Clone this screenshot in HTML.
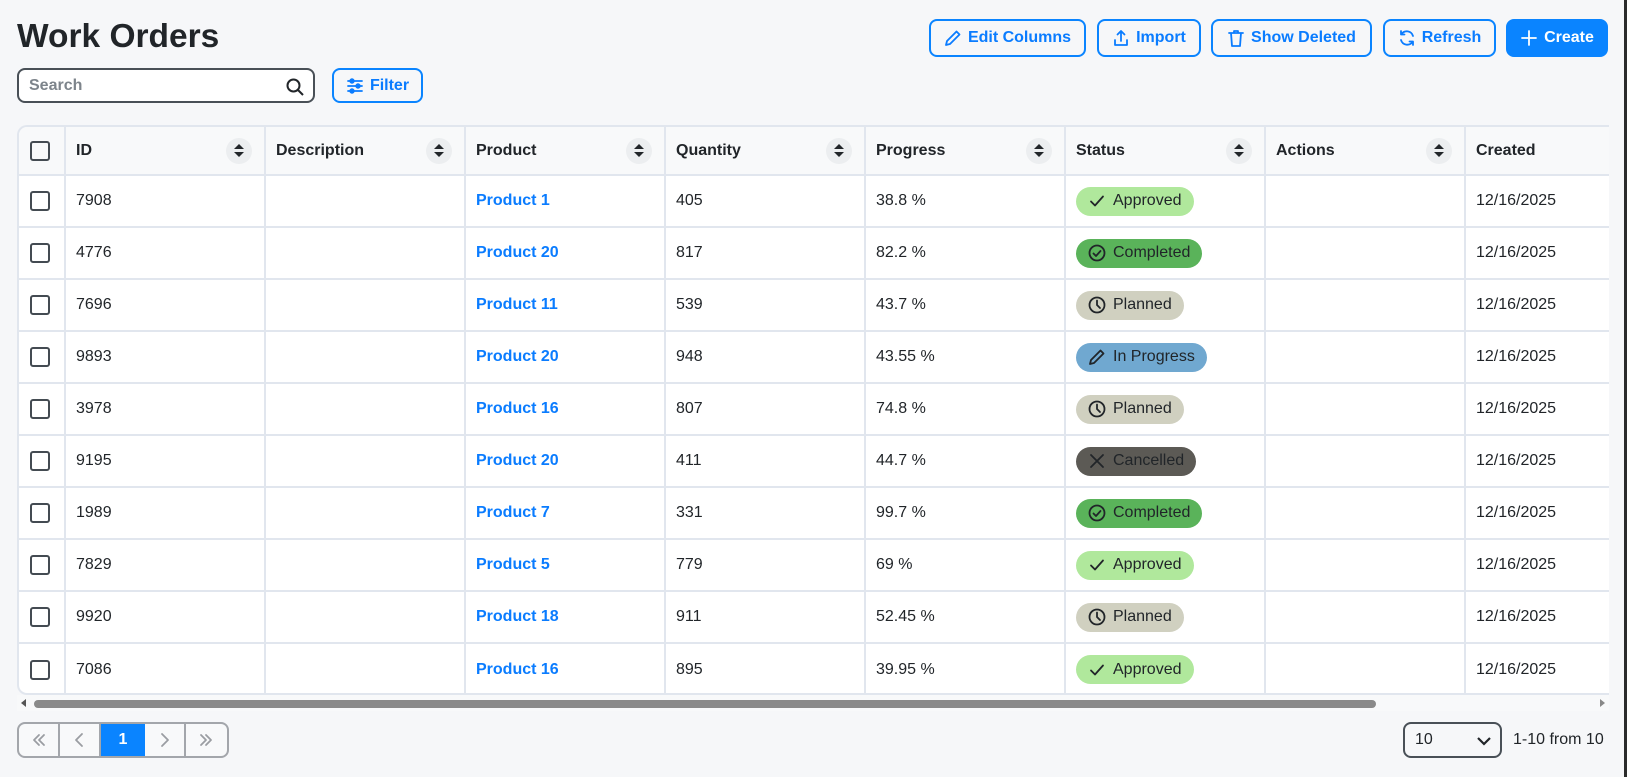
<!DOCTYPE html>
<html><head><meta charset="utf-8"><style>
*{box-sizing:border-box;margin:0;padding:0}
body{width:1627px;height:777px;background:#f6f7f9;font-family:"Liberation Sans",sans-serif;color:#212529;position:relative;overflow:hidden}
.strip{position:absolute;right:0;top:0;width:3px;height:777px;background:#2b2b2b}
h1{position:absolute;left:17px;top:18px;font-size:33.5px;font-weight:bold;color:#212529}
.search{position:absolute;left:17px;top:68px;width:298px;height:35px;border:2px solid #495057;border-radius:8px;background:#fff;font-size:16px;font-weight:bold;color:#7d848b;padding:7px 10px}
.search svg{position:absolute;right:8px;top:7px}
.btn{position:absolute;height:38px;border:2px solid #0a84ff;border-radius:8px;color:#0a7cff;font-weight:bold;font-size:16px;display:flex;align-items:center;justify-content:center;gap:6px;background:#f6f7f9}
.btn svg{stroke:#0a7cff;fill:none;stroke-width:1.8;stroke-linecap:round;stroke-linejoin:round}
.tbl{position:absolute;left:17px;top:125px;width:1592px;height:570px;border:2px solid #e1e6ee;border-right:none;border-radius:10px 0 0 10px;background:#fff;overflow:hidden}
table{border-collapse:collapse;font-size:16px;table-layout:fixed;width:1646px}
td,th{border-right:2px solid #e1e6ee;border-bottom:2px solid #e1e6ee;height:52px;text-align:left;padding:0 10px;position:relative}
th{height:48px;background:#f8f9fa;font-weight:bold}
tr:last-child td{border-bottom:none}
.cb{padding:0 0 0 11px}
.box{width:20px;height:20px;border:2px solid #444b52;border-radius:3px}
.sort{position:absolute;right:12px;top:11px;width:26px;height:26px;border-radius:50%;background:#eceef0}
.sort:before{content:"";position:absolute;left:8px;top:6px;border:5px solid transparent;border-bottom:5px solid #212529;border-top:none}
.sort:after{content:"";position:absolute;left:8px;top:14px;border:5px solid transparent;border-top:5px solid #212529;border-bottom:none}
a{color:#0a7cff;font-weight:bold;text-decoration:none}
.bd{display:inline-flex;align-items:center;gap:7px;height:29px;padding:0 12px;border-radius:15px;font-size:16px;color:#212529}
.bd svg{fill:none;stroke:#212529;stroke-width:1.8;stroke-linecap:round;stroke-linejoin:round}
.scroll{position:absolute;left:17px;top:695px;width:1592px;height:16px;background:#f8f9fa}
.thumb{position:absolute;left:17px;top:5px;width:1342px;height:8px;border-radius:4px;background:#8a8a8a}
.pg{position:absolute;left:17px;top:722px;height:36px;width:212px;border:2px solid #a3a6ab;border-radius:8px;display:flex;overflow:hidden;background:#f8f9fa}
.pg div{width:42px;border-right:2px solid #a3a6ab;display:flex;align-items:center;justify-content:center}
.pg svg{fill:none;stroke:#9a9da2;stroke-width:1.8;stroke-linecap:round;stroke-linejoin:round}
.pg div:last-child{border:none}
.pg .on{background:#0a84ff;color:#fff;font-weight:bold;font-size:16px;border:none;width:44px}
.sel{position:absolute;left:1403px;top:722px;width:99px;height:36px;border:2px solid #495057;border-radius:8px;font-size:16px;padding:7px 10px}
</style></head><body>
<div class="strip"></div>
<h1>Work Orders</h1>
<div class="search">Search<svg width="20" height="20" viewBox="0 0 20 20" fill="none" stroke="#212529" stroke-width="2"><circle cx="8.5" cy="8.5" r="6"/><path d="M13 13l5 5"/></svg></div>
<div class="btn" style="left:332px;top:68px;width:91px;height:35px"><svg width="18" height="18" viewBox="0 0 18 18"><path d="M2 4h14M2 9h14M2 14h14"/><circle cx="6" cy="4" r="1.8" fill="#0a7cff"/><circle cx="12" cy="9" r="1.8" fill="#0a7cff"/><circle cx="6" cy="14" r="1.8" fill="#0a7cff"/></svg>Filter</div>
<div class="btn" style="left:929px;top:19px;width:157px"><svg width="18" height="18" viewBox="0 0 18 18"><path d="M12.5 2.5l3 3L6 15l-4 1 1-4z"/></svg>Edit Columns</div>
<div class="btn" style="left:1097px;top:19px;width:104px"><svg width="18" height="18" viewBox="0 0 18 18"><path d="M9 12V2M5.5 5.5L9 2l3.5 3.5M3 11v5h12v-5"/></svg>Import</div>
<div class="btn" style="left:1211px;top:19px;width:161px"><svg width="18" height="18" viewBox="0 0 18 18"><path d="M2 4h14M7 4V2h4v2M4 4l1 13h8l1-13"/></svg>Show Deleted</div>
<div class="btn" style="left:1383px;top:19px;width:113px"><svg width="18" height="18" viewBox="0 0 18 18"><path d="M15 7A6.5 6.5 0 0 0 3.5 5M3 2v3.5h3.5M3 11a6.5 6.5 0 0 0 11.5 2M15 16v-3.5h-3.5"/></svg>Refresh</div>
<div class="btn" style="left:1506px;top:19px;width:102px;background:#0a84ff;color:#fff;border-color:#0a84ff"><svg width="18" height="18" viewBox="0 0 18 18" style="stroke:#fff"><path d="M9 2v14M2 9h14"/></svg>Create</div>

<div class="tbl"><table>
<colgroup><col style="width:46px"><col style="width:200px"><col style="width:200px"><col style="width:200px"><col style="width:200px"><col style="width:200px"><col style="width:200px"><col style="width:200px"><col style="width:200px"></colgroup>
<tr><th class="cb"><div class="box"></div></th><th>ID<span class="sort"></span></th><th>Description<span class="sort"></span></th><th>Product<span class="sort"></span></th><th>Quantity<span class="sort"></span></th><th>Progress<span class="sort"></span></th><th>Status<span class="sort"></span></th><th>Actions<span class="sort"></span></th><th>Created</th></tr>
<tr><td class="cb"><div class="box"></div></td><td>7908</td><td></td><td><a>Product 1</a></td><td>405</td><td>38.8 %</td><td><span class="bd" style="background:#b0e89c"><svg width="18" height="18" viewBox="0 0 18 18"><path d="M3 9.5l4 4 8-9"/></svg>Approved</span></td><td></td><td>12/16/2025</td></tr>
<tr><td class="cb"><div class="box"></div></td><td>4776</td><td></td><td><a>Product 20</a></td><td>817</td><td>82.2 %</td><td><span class="bd" style="background:#5ab35a"><svg width="18" height="18" viewBox="0 0 18 18"><circle cx="9" cy="9" r="7.5"/><path d="M5.5 9.5l2.5 2.5 4.5-5"/></svg>Completed</span></td><td></td><td>12/16/2025</td></tr>
<tr><td class="cb"><div class="box"></div></td><td>7696</td><td></td><td><a>Product 11</a></td><td>539</td><td>43.7 %</td><td><span class="bd" style="background:#d0d0c0"><svg width="18" height="18" viewBox="0 0 18 18"><circle cx="9" cy="9" r="7.5"/><path d="M9 4.5V9l3 3"/></svg>Planned</span></td><td></td><td>12/16/2025</td></tr>
<tr><td class="cb"><div class="box"></div></td><td>9893</td><td></td><td><a>Product 20</a></td><td>948</td><td>43.55 %</td><td><span class="bd" style="background:#70a8d0"><svg width="18" height="18" viewBox="0 0 18 18"><path d="M12.5 2.5l3 3L6 15l-4 1 1-4z"/></svg>In Progress</span></td><td></td><td>12/16/2025</td></tr>
<tr><td class="cb"><div class="box"></div></td><td>3978</td><td></td><td><a>Product 16</a></td><td>807</td><td>74.8 %</td><td><span class="bd" style="background:#d0d0c0"><svg width="18" height="18" viewBox="0 0 18 18"><circle cx="9" cy="9" r="7.5"/><path d="M9 4.5V9l3 3"/></svg>Planned</span></td><td></td><td>12/16/2025</td></tr>
<tr><td class="cb"><div class="box"></div></td><td>9195</td><td></td><td><a>Product 20</a></td><td>411</td><td>44.7 %</td><td><span class="bd" style="background:#5c5a55"><svg width="18" height="18" viewBox="0 0 18 18"><path d="M3 3l12 12M15 3L3 15"/></svg>Cancelled</span></td><td></td><td>12/16/2025</td></tr>
<tr><td class="cb"><div class="box"></div></td><td>1989</td><td></td><td><a>Product 7</a></td><td>331</td><td>99.7 %</td><td><span class="bd" style="background:#5ab35a"><svg width="18" height="18" viewBox="0 0 18 18"><circle cx="9" cy="9" r="7.5"/><path d="M5.5 9.5l2.5 2.5 4.5-5"/></svg>Completed</span></td><td></td><td>12/16/2025</td></tr>
<tr><td class="cb"><div class="box"></div></td><td>7829</td><td></td><td><a>Product 5</a></td><td>779</td><td>69 %</td><td><span class="bd" style="background:#b0e89c"><svg width="18" height="18" viewBox="0 0 18 18"><path d="M3 9.5l4 4 8-9"/></svg>Approved</span></td><td></td><td>12/16/2025</td></tr>
<tr><td class="cb"><div class="box"></div></td><td>9920</td><td></td><td><a>Product 18</a></td><td>911</td><td>52.45 %</td><td><span class="bd" style="background:#d0d0c0"><svg width="18" height="18" viewBox="0 0 18 18"><circle cx="9" cy="9" r="7.5"/><path d="M9 4.5V9l3 3"/></svg>Planned</span></td><td></td><td>12/16/2025</td></tr>
<tr><td class="cb"><div class="box"></div></td><td>7086</td><td></td><td><a>Product 16</a></td><td>895</td><td>39.95 %</td><td><span class="bd" style="background:#b0e89c"><svg width="18" height="18" viewBox="0 0 18 18"><path d="M3 9.5l4 4 8-9"/></svg>Approved</span></td><td></td><td>12/16/2025</td></tr>
</table></div>
<div class="scroll"><div style="position:absolute;left:4px;top:4px;border:4px solid transparent;border-right:5px solid #555;border-left:none"></div><div class="thumb"></div><div style="position:absolute;right:4px;top:4px;border:4px solid transparent;border-left:5px solid #888;border-right:none"></div></div>
<div class="pg"><div><svg width="18" height="18" viewBox="0 0 18 18"><path d="M9 4L4 9l5 5M14 4L9 9l5 5"/></svg></div><div><svg width="18" height="18" viewBox="0 0 18 18"><path d="M11 3L5 9l6 6"/></svg></div><div class="on">1</div><div><svg width="18" height="18" viewBox="0 0 18 18"><path d="M7 3l6 6-6 6"/></svg></div><div><svg width="18" height="18" viewBox="0 0 18 18"><path d="M4 4l5 5-5 5M9 4l5 5-5 5"/></svg></div></div>
<div class="sel">10<svg style="position:absolute;right:8px;top:11px" width="16" height="12" viewBox="0 0 16 12" fill="none" stroke="#212529" stroke-width="2.2"><path d="M2 3l6 6 6-6"/></svg></div>
<div style="position:absolute;left:1513px;top:731px;font-size:16px">1-10 from 10</div>
</body></html>
